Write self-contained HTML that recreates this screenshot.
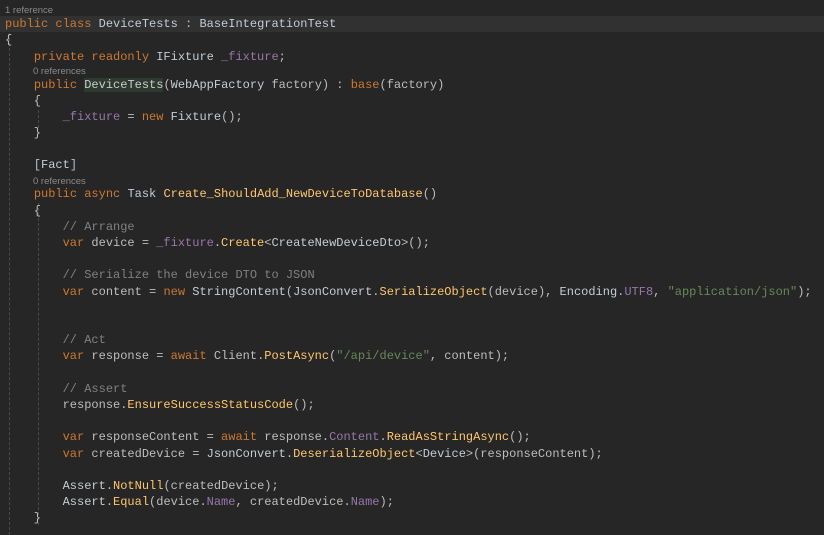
<!DOCTYPE html>
<html><head><style>
body{margin:0;background:#262626;width:824px;height:535px;overflow:hidden;position:relative;font-family:"Liberation Mono",monospace;font-size:12px;color:#bdbdbd}
.l{position:absolute;left:5px;height:16px;line-height:16px;white-space:pre}
.r{position:absolute;font-family:"Liberation Sans",sans-serif;font-size:9.5px;color:#8a8a8a;white-space:pre;line-height:12px}
.k{color:#cc7832}.f{color:#9876aa}.m{color:#ffc66d}.c{color:#808080}.s{color:#6a8759}.t{color:#c5ccd3}
.g{position:absolute;border-left:1px dashed #4a4a4a;width:0}
</style></head><body>
<div style="position:absolute;left:0;top:16px;width:824px;height:16px;background:#313131"></div>
<div class="g" style="left:9px;top:33px;height:502px"></div>
<div class="g" style="left:38px;top:110px;height:18px"></div>
<div class="g" style="left:38px;top:203px;height:322px"></div>
<div class="r" style="left:5px;top:5px">1 reference</div>
<div class="l" style="top:16px"><span class="k">public class</span> <span class="t">DeviceTests</span> : <span class="t">BaseIntegrationTest</span></div>
<div class="l" style="top:32px">{</div>
<div class="l" style="top:49px">    <span class="k">private readonly</span> <span class="t">IFixture</span> <span class="f">_fixture</span>;</div>
<div class="r" style="left:33px;top:66px">0 references</div>
<div class="l" style="top:77px">    <span class="k">public</span> <span class="t" style="background:#2f3a2f">DeviceTests</span>(<span class="t">WebAppFactory</span> factory) : <span class="k">base</span>(factory)</div>
<div class="l" style="top:93px">    {</div>
<div class="l" style="top:109px">        <span class="f">_fixture</span> = <span class="k">new</span> <span class="t">Fixture</span>();</div>
<div class="l" style="top:125px">    }</div>
<div class="l" style="top:157px">    [<span class="t">Fact</span>]</div>
<div class="r" style="left:33px;top:176px">0 references</div>
<div class="l" style="top:186px">    <span class="k">public async</span> <span class="t">Task</span> <span class="m">Create_ShouldAdd_NewDeviceToDatabase</span>()</div>
<div class="l" style="top:203px">    {</div>
<div class="l" style="top:219px">        <span class="c">// Arrange</span></div>
<div class="l" style="top:235px">        <span class="k">var</span> device = <span class="f">_fixture</span>.<span class="m">Create</span>&lt;<span class="t">CreateNewDeviceDto</span>&gt;();</div>
<div class="l" style="top:267px">        <span class="c">// Serialize the device DTO to JSON</span></div>
<div class="l" style="top:284px">        <span class="k">var</span> content = <span class="k">new</span> <span class="t">StringContent</span>(<span class="t">JsonConvert</span>.<span class="m">SerializeObject</span>(device), <span class="t">Encoding</span>.<span class="f">UTF8</span>, <span class="s">"application/json"</span>);</div>
<div class="l" style="top:332px">        <span class="c">// Act</span></div>
<div class="l" style="top:348px">        <span class="k">var</span> response = <span class="k">await</span> Client.<span class="m">PostAsync</span>(<span class="s">"/api/device"</span>, content);</div>
<div class="l" style="top:381px">        <span class="c">// Assert</span></div>
<div class="l" style="top:397px">        response.<span class="m">EnsureSuccessStatusCode</span>();</div>
<div class="l" style="top:429px">        <span class="k">var</span> responseContent = <span class="k">await</span> response.<span class="f">Content</span>.<span class="m">ReadAsStringAsync</span>();</div>
<div class="l" style="top:446px">        <span class="k">var</span> createdDevice = <span class="t">JsonConvert</span>.<span class="m">DeserializeObject</span>&lt;<span class="t">Device</span>&gt;(responseContent);</div>
<div class="l" style="top:478px">        <span class="t">Assert</span>.<span class="m">NotNull</span>(createdDevice);</div>
<div class="l" style="top:494px">        <span class="t">Assert</span>.<span class="m">Equal</span>(device.<span class="f">Name</span>, createdDevice.<span class="f">Name</span>);</div>
<div class="l" style="top:510px">    }</div>
</body></html>
